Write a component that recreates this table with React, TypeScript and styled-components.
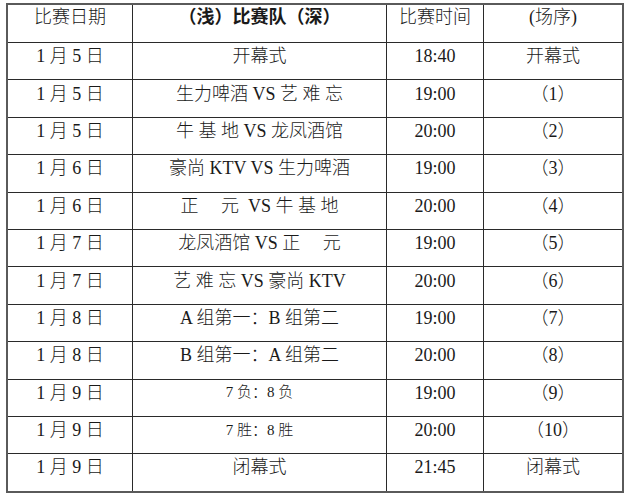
import React from "react";
import styled, { createGlobalStyle } from "styled-components";

const Global = createGlobalStyle`
  html, body { margin: 0; padding: 0; background: #fff; }
  body { font-family: "Liberation Serif", "Noto Sans CJK SC", serif; color: #1a1a1a; }
`;

const Sheet = styled.div`
  margin: 3px 0 0 6px;
  width: 618px;
  box-sizing: border-box;
  display: grid;
  grid-template-columns: 124px 253px 96px 138px;
  grid-template-rows: 37px repeat(12, 36.4px);
  gap: 1px;
  background: #2a2a2a;
  border: 2px solid #5a5a5a;
`;

const Cell = styled.div<{ $head?: boolean; $bold?: boolean; $small?: boolean }>`
  background: #fff;
  display: flex;
  justify-content: center;
  align-items: center;
  padding-bottom: ${(p) => (p.$head ? 13 : 10)}px;
  font-size: ${(p) => (p.$small ? 15 : 18)}px;
  font-weight: ${(p) => (p.$bold ? 700 : 300)};
  white-space: pre;
  line-height: 1;
`;

type Row = { date: string; teams: string; time: string; order: string; small?: boolean };

const rows: Row[] = [
  { date: "1 月 5 日", teams: "开幕式", time: "18:40", order: "开幕式" },
  { date: "1 月 5 日", teams: "生力啤酒 VS 艺 难 忘", time: "19:00", order: "（1）" },
  { date: "1 月 5 日", teams: "牛 基 地 VS 龙凤酒馆", time: "20:00", order: "（2）" },
  { date: "1 月 6 日", teams: "豪尚 KTV VS 生力啤酒", time: "19:00", order: "（3）" },
  { date: "1 月 6 日", teams: "正\u3000 元  VS 牛 基 地", time: "20:00", order: "（4）" },
  { date: "1 月 7 日", teams: "龙凤酒馆 VS 正\u3000 元", time: "19:00", order: "（5）" },
  { date: "1 月 7 日", teams: "艺 难 忘 VS 豪尚 KTV", time: "20:00", order: "（6）" },
  { date: "1 月 8 日", teams: "A 组第一：B 组第二", time: "19:00", order: "（7）" },
  { date: "1 月 8 日", teams: "B 组第一：A 组第二", time: "20:00", order: "（8）" },
  { date: "1 月 9 日", teams: "7 负：8 负", time: "19:00", order: "（9）", small: true },
  { date: "1 月 9 日", teams: "7 胜：8 胜", time: "20:00", order: "（10）", small: true },
  { date: "1 月 9 日", teams: "闭幕式", time: "21:45", order: "闭幕式" },
];

export default function App() {
  return (
    <>
      <Global />
      <Sheet>
        <Cell $head>比赛日期</Cell>
        <Cell $head $bold>（浅）比赛队（深）</Cell>
        <Cell $head>比赛时间</Cell>
        <Cell $head>(场序)</Cell>
        {rows.map((r, i) => (
          <React.Fragment key={i}>
            <Cell>{r.date}</Cell>
            <Cell $small={r.small}>{r.teams}</Cell>
            <Cell>{r.time}</Cell>
            <Cell>{r.order}</Cell>
          </React.Fragment>
        ))}
      </Sheet>
    </>
  );
}
